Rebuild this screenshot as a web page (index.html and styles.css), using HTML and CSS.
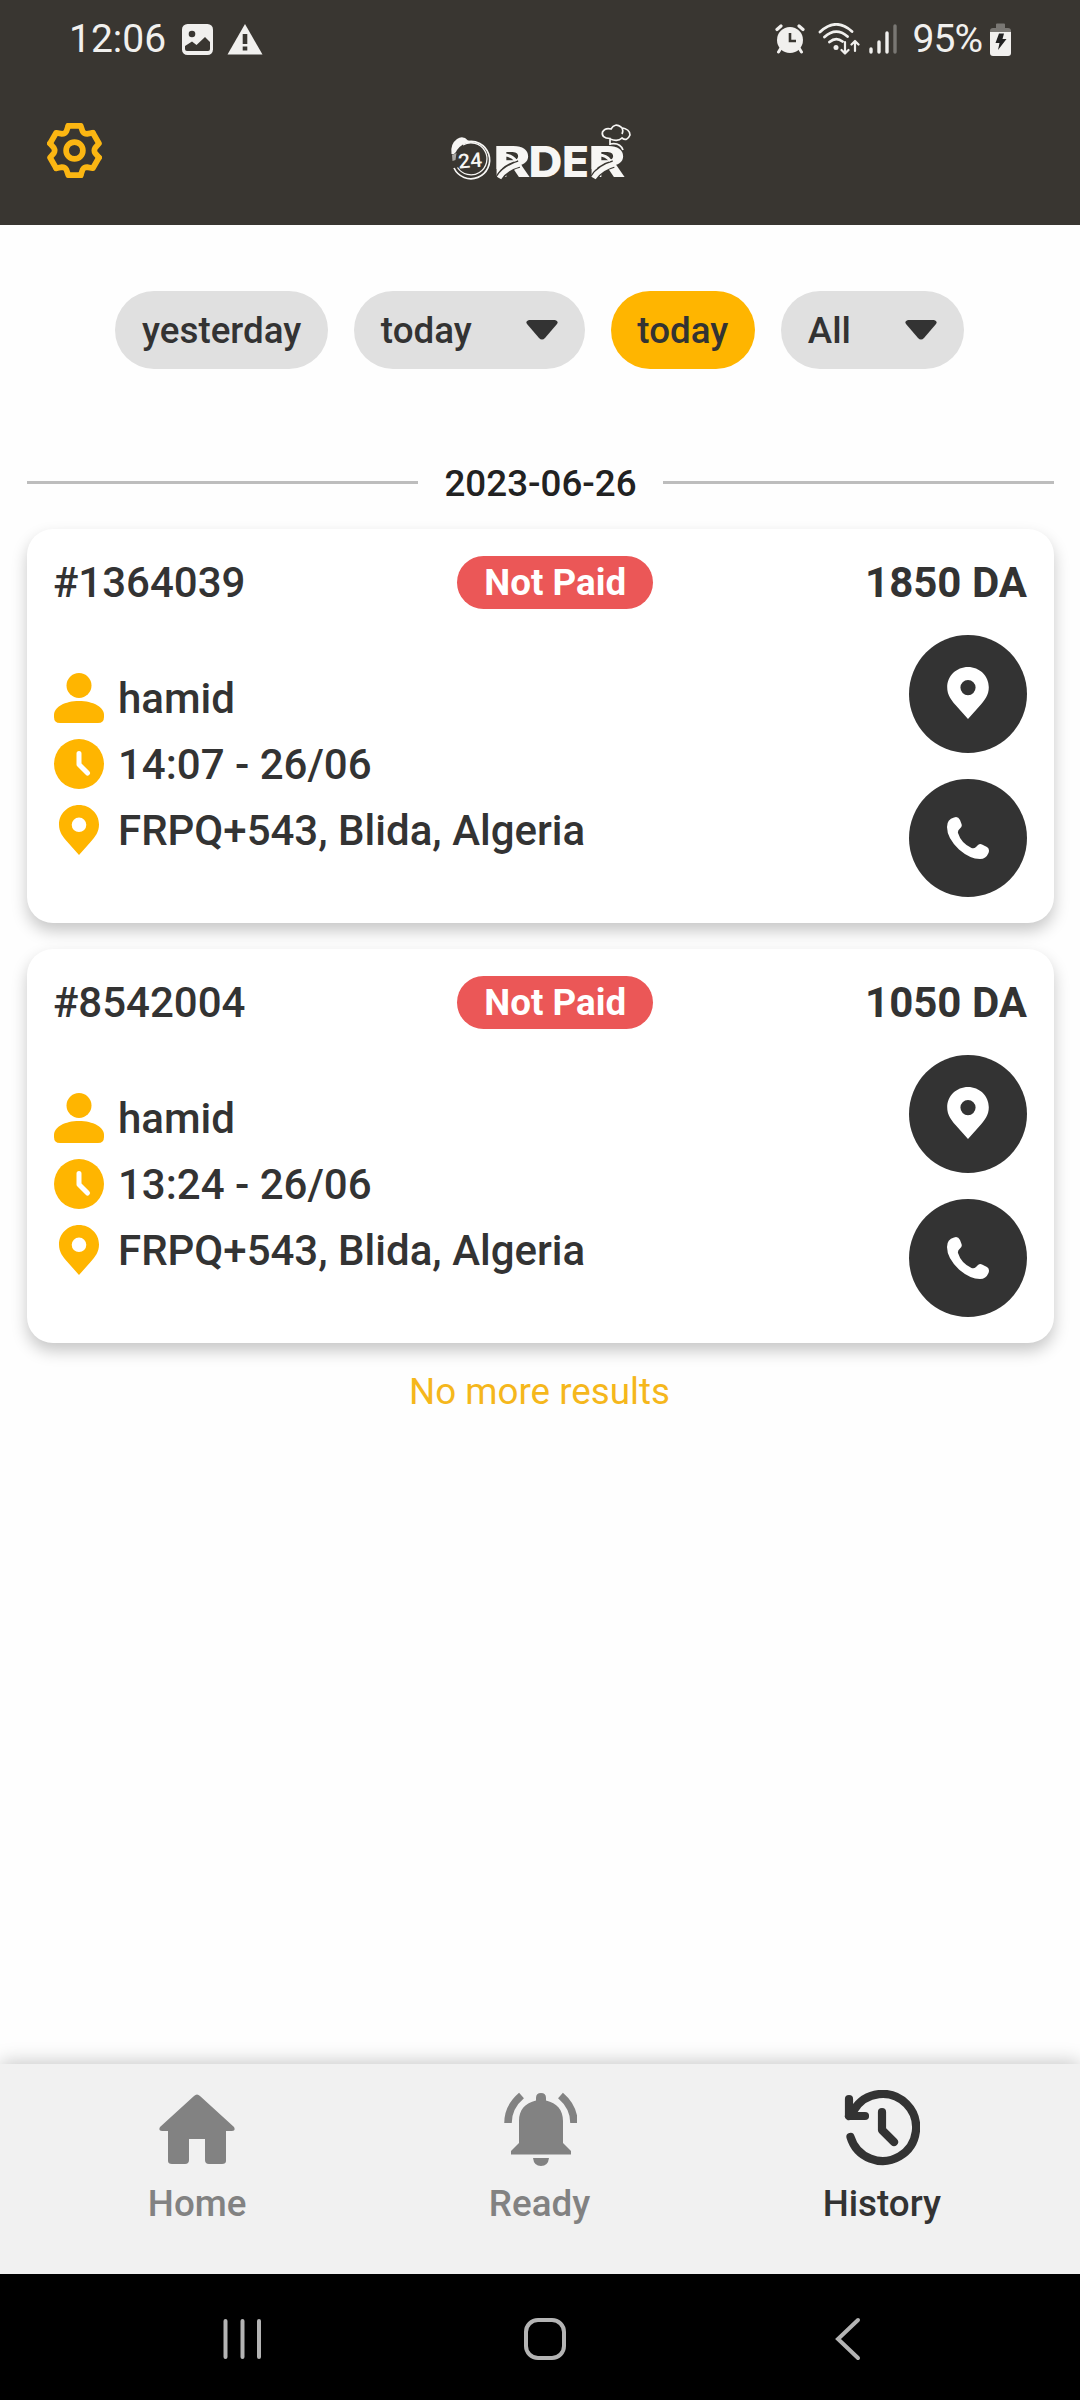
FILE: index.html
```html
<!DOCTYPE html>
<html lang="en">
<head>
	<meta charset="utf-8">
	<title>24 Order - History</title>
	<link rel="stylesheet" href="styles.css">
</head>
<body>
	<!-- shared icons -->
	<svg class="sprite">
		<symbol id="user" viewBox="0 0 50 50">
			<ellipse cx="25" cy="12.5" rx="12.5" ry="12.5"/>
			<path d="M25 28C39 28 50 34 50 42V44Q50 50 44 50H6Q0 50 0 44V42C0 34 11 28 25 28Z"/>
		</symbol>
		<symbol id="clock" viewBox="0 0 50 50">
			<circle cx="25" cy="25" r="25"/>
			<path d="M25 14.500V25.500L33.500 34" fill="none" stroke="#fff" stroke-width="5" stroke-linecap="round" stroke-linejoin="round"/>
		</symbol>
		<symbol id="pin" viewBox="0 0 40 50">
			<path fill-rule="evenodd" d="M20 0C31 0 40 8.500 40 19.500C40 27 36 32 32 36.500L20 50L8 36.500C4 32 0 27 0 19.500C0 8.500 9 0 20 0ZM20 12.500A7.300 7.300 0 1 0 20 27.100A7.300 7.300 0 1 0 20 12.500Z"/>
		</symbol>
		<symbol id="phone" viewBox="0 0 42 42">
			<path d="M0 10Q0 2 7 .5Q11 -1 13 3L14.500 7Q15.500 9.500 13 11.500Q10.500 13.500 11 16Q14 26 24.500 31Q27 32 29 30L31 28Q33 26.500 35 27.500L40 30Q43 32 41.500 36Q39 42 33 42Q23 42 12 32.500Q0 21 0 10Z"/>
		</symbol>
		<symbol id="caret" viewBox="0 0 32 20">
			<path d="M3 0H29Q33 1 31 4L19 18Q16 21 13 18L1 4Q-1 1 3 0Z"/>
		</symbol>
	</svg>

	<header class="header">
		<div class="status-bar">
			<div class="status-left">
				<span class="time">12:06</span>
				<svg class="status-photo" width="31" height="31" viewBox="0 0 31 31">
					<rect width="31" height="31" rx="5.500" fill="#f1f0ee"/>
					<circle cx="10" cy="10" r="3.300" fill="#393631"/>
					<path d="M3 25V22L10 17.500L14.500 21L23 13L28 18V25Q28 27 26 27H5Q3 27 3 25Z" fill="#393631"/>
				</svg>
				<svg width="36" height="31" viewBox="0 0 36 31">
					<path d="M18 0L35.500 30.500H.5Z" fill="#f1f0ee"/>
					<path d="M15.700 10H20.300V20H15.700ZM15.700 22.500H20.300V26.500H15.700Z" fill="#393631"/>
				</svg>
			</div>
			<div class="status-right">
				<svg width="30" height="30" viewBox="0 0 30 30">
					<g fill="none" stroke="#f1f0ee" stroke-linecap="round">
						<path d="M2 5.500L6 2M28 5.500L24 2" stroke-width="3.200"/>
						<path d="M6 24L3.500 28M24 24L26.500 28" stroke-width="3"/>
					</g>
					<circle cx="15" cy="16" r="13" fill="#f1f0ee"/>
					<path d="M15 9V17H21" fill="none" stroke="#393631" stroke-width="2.600"/>
				</svg>
				<svg class="status-wifi" width="42" height="32" viewBox="0 0 42 32">
					<g fill="none" stroke="#f1f0ee" stroke-width="2.800" stroke-linecap="round" stroke-linejoin="round">
						<path d="M2 9Q18 -6 34 8.500M6.500 14Q18 3.500 29.500 13.500M11.500 19Q18 13.500 24.500 18.500"/>
						<path d="M27 19V30M23.500 27L27 30.500L30.500 27M37 28V18M33.500 21.500L37 18L40.500 21.500" stroke-width="2.200"/>
					</g>
					<circle cx="18" cy="24.500" r="2.500" fill="#f1f0ee"/>
				</svg>
				<svg class="status-signal" width="28" height="30" viewBox="0 0 28 30">
					<path d="M2 25V28M10 18V28M18 9V28" stroke="#f1f0ee" stroke-width="3.400" stroke-linecap="round"/>
					<path d="M26 2V28" stroke="#797773" stroke-width="3.400" stroke-linecap="round"/>
				</svg>
				<span class="battery-text">95%</span>
				<svg width="21" height="33" viewBox="0 0 21 33">
					<path d="M6 5V1.500Q6 .5 7 .5H14Q15 .5 15 1.500V5H18Q21 5 21 8V9H0V8Q0 5 3 5Z" fill="#797773"/>
					<path d="M0 9H21V30Q21 33 18 33H3Q0 33 0 30Z" fill="#f1f0ee"/>
					<path d="M9 10.500H14L12.500 16H16.500L8 27L9.500 20H5.500Z" fill="#222"/>
				</svg>
			</div>
		</div>
		<div class="app-bar">
			<svg class="settings" width="55" height="55" viewBox="-82 -82 164 164">
				<g fill="none" stroke="#fbb612" stroke-width="17" stroke-linecap="round" stroke-linejoin="round">
					<path d="M-18.400 -73.700H18.400L24.200 -57Q28.500 -49.400 37.300 -49.500L54.700 -52.800"/>
					<path transform="rotate(60)" d="M-18.400 -73.700H18.400L24.200 -57Q28.500 -49.400 37.300 -49.500L54.700 -52.800"/>
					<path transform="rotate(120)" d="M-18.400 -73.700H18.400L24.200 -57Q28.500 -49.400 37.300 -49.500L54.700 -52.800"/>
					<path transform="rotate(180)" d="M-18.400 -73.700H18.400L24.200 -57Q28.500 -49.400 37.300 -49.500L54.700 -52.800"/>
					<path transform="rotate(240)" d="M-18.400 -73.700H18.400L24.200 -57Q28.500 -49.400 37.300 -49.500L54.700 -52.800"/>
					<path transform="rotate(300)" d="M-18.400 -73.700H18.400L24.200 -57Q28.500 -49.400 37.300 -49.500L54.700 -52.800"/>
					<circle r="25"/>
				</g>
			</svg>
			<svg class="logo" width="180" height="76" viewBox="0 0 180 76">
				<!-- clock with the 24 -->
				<g fill="none" stroke="#f7f6f4">
					<path d="M16 21A18.700 18.700 0 1 1 4 47" stroke-width="1.700"/>
					<path d="M13 24A16 16 0 1 1 7.500 46.500" stroke-width="1.300"/>
				</g>
				<path d="M1.500 33Q0 23 7 18Q13 14 18 19.500Q22 20 25 22Q13 20 7 29Q5 34 1.500 33Z" fill="#f7f6f4"/>
				<path d="M2 34L6.500 32L5.500 39L2.500 40Z" fill="#aaa8a4"/>
				<text class="logo-number" x="8" y="46.500" textLength="24" lengthAdjust="spacingAndGlyphs" transform="rotate(-5 20 38)">24</text>
				<g class="logo-text">
					<text x="43.500" y="56" textLength="37" lengthAdjust="spacingAndGlyphs">R</text>
					<text x="78.500" y="56" textLength="34" lengthAdjust="spacingAndGlyphs">D</text>
					<text x="112" y="56" textLength="27" lengthAdjust="spacingAndGlyphs">E</text>
					<text x="138.500" y="56" textLength="37" lengthAdjust="spacingAndGlyphs">R</text>
				</g>
				<!-- swoosh through both R -->
				<g fill="none" stroke="#393631" stroke-width="8">
					<path d="M49 58Q54 47 69 43M143.500 58Q148.500 47 163.500 43"/>
				</g>
				<g fill="none" stroke="#f7f6f4" stroke-width="5">
					<path d="M49 57Q55 47 71 42.500M143.500 57Q149.500 47 165.500 42.500"/>
					<path d="M54 34Q62 34 66 40M148.500 34Q156.500 34 160.500 40" stroke-width="3"/>
					<path d="M49 25V48M144 25V48"/>
				</g>
				<!-- chef hat -->
				<path d="M160 24V17.500Q151 17 152.500 11Q155 6.500 161 8Q165 1.500 171 6Q174 9 172 13M171 6.500Q180 8 180 14Q177 21 172 17Q168 21 160 18M160 23Q170 21 173 29" fill="none" stroke="#f7f6f4" stroke-width="1.700"/>
			</svg>
		</div>
	</header>

	<main class="content">
		<div class="filters">
			<button class="chip">yesterday</button>
			<button class="chip">today <svg class="caret"><use href="#caret"/></svg></button>
			<button class="chip active">today</button>
			<button class="chip">All <svg class="caret"><use href="#caret"/></svg></button>
		</div>

		<div class="date-divider">
			<span class="line"></span>
			<span class="date">2023-06-26</span>
			<span class="line"></span>
		</div>

		<section class="order-card">
			<div class="order-top">
				<span class="order-id">#1364039</span>
				<span class="badge">Not Paid</span>
				<span class="price">1850 DA</span>
			</div>
			<div class="order-body">
				<div class="details">
					<div class="detail"><svg><use href="#user"/></svg><span>hamid</span></div>
					<div class="detail"><svg><use href="#clock"/></svg><span>14:07 - 26/06</span></div>
					<div class="detail"><svg><use href="#pin"/></svg><span>FRPQ+543, Blida, Algeria</span></div>
				</div>
				<div class="actions">
					<button class="round-button"><svg class="map-icon"><use href="#pin"/></svg></button>
					<button class="round-button"><svg class="phone-icon"><use href="#phone"/></svg></button>
				</div>
			</div>
		</section>

		<section class="order-card">
			<div class="order-top">
				<span class="order-id">#8542004</span>
				<span class="badge">Not Paid</span>
				<span class="price">1050 DA</span>
			</div>
			<div class="order-body">
				<div class="details">
					<div class="detail"><svg><use href="#user"/></svg><span>hamid</span></div>
					<div class="detail"><svg><use href="#clock"/></svg><span>13:24 - 26/06</span></div>
					<div class="detail"><svg><use href="#pin"/></svg><span>FRPQ+543, Blida, Algeria</span></div>
				</div>
				<div class="actions">
					<button class="round-button"><svg class="map-icon"><use href="#pin"/></svg></button>
					<button class="round-button"><svg class="phone-icon"><use href="#phone"/></svg></button>
				</div>
			</div>
		</section>

		<p class="no-more">No more results</p>
	</main>

	<nav class="tab-bar">
		<a class="tab">
			<svg width="76" height="76" viewBox="0 0 76 76">
				<path d="M35 6Q38 3 41 6L75 37Q77 41 73 41H67V71Q67 74 63 74H50Q46 74 46 70V49H30V70Q30 74 26 74H13Q9 74 9 71V41H3Q-1 41 1 37Z" fill="#828282"/>
			</svg>
			<span>Home</span>
		</a>
		<a class="tab">
			<svg width="76" height="76" viewBox="-2 0 76 76">
				<path d="M33 8Q33 3 38 3Q43 3 43 8V10.500C54 13 60 20 60 31V53L68 61V64.500H8V61L16 53V31C16 20 22 13 33 10.500ZM30 68H46Q45 76 38 76Q31 76 30 68Z" fill="#828282"/>
				<path d="M18.500 5.500Q5 17 5 33M57.500 5.500Q71 17 71 33" fill="none" stroke="#828282" stroke-width="7.500"/>
			</svg>
			<span>Ready</span>
		</a>
		<a class="tab selected">
			<svg width="76" height="76" viewBox="0 0 76 76">
				<g fill="none" stroke="#333" stroke-width="8.200" stroke-linecap="round" stroke-linejoin="round">
					<path d="M6.500 47A33.500 33.500 0 1 0 10 20L5 26M5 9V26H21M38 22V40L50 52"/>
				</g>
			</svg>
			<span>History</span>
		</a>
	</nav>

	<div class="system-nav">
		<svg width="44" height="44" viewBox="0 0 44 44"><path d="M5.500 4V40M22.500 4V40M39 4V40"/></svg>
		<svg width="44" height="44" viewBox="0 0 44 44"><rect x="3" y="3" width="38" height="38" rx="12"/></svg>
		<svg width="44" height="44" viewBox="0 0 44 44"><path d="M32 3L12 22L32 41"/></svg>
	</div>
</body>
</html>
```
FILE: styles.css
```css
* {
	box-sizing: border-box;
}

body {
	font-family: Roboto, sans-serif;
	margin: 0;
	width: 1080px;
	height: 2400px;
	display: flex;
	flex-direction: column;
	background-color: #fefefe;
	color: #333;
	overflow: hidden;
}

svg {
	display: block;
	flex: none;
}

.sprite {
	display: none;
}

/* header */
.header {
	height: 225px;
	background-color: #393631;
}

.status-bar {
	height: 78px;
	padding: 0 69px 0 69px;
	display: flex;
	justify-content: space-between;
	align-items: center;
	font-size: 39px;
	color: #f1f0ee;
}

.status-left, .status-right {
	display: flex;
	align-items: center;
}

.status-photo {
	margin: 0 14px 0 16px;
}

.status-wifi {
	margin-left: 13px;
}

.status-signal {
	margin-left: 9px;
}

.battery-text {
	margin: 0 8px 0 16px;
	letter-spacing: -1px;
}

.app-bar {
	height: 147px;
	padding: 45px 47px 0;
	display: flex;
}

.logo {
	margin-left: 348px;
	margin-top: -2px;
	overflow: visible;
}

.logo-number {
	font-size: 20px;
	font-weight: 500;
	fill: #f7f6f4;
}

.logo-text {
	font-family: Inter, sans-serif;
	font-size: 43px;
	font-weight: 800;
	fill: #f7f6f4;
}

/* filters */
.content {
	flex: 1;
	padding: 66px 26px 0 27px;
}

button {
	font-family: inherit;
	border: none;
	color: #333;
}

.filters {
	display: flex;
	justify-content: center;
	gap: 26px;
	padding-right: 2px;
}

.chip {
	height: 78px;
	padding: 0 26.8px;
	border-radius: 39px;
	background-color: #e0e0e0;
	font-size: 36.75px;
	font-weight: 500;
	display: flex;
	align-items: center;
}

.chip.active {
	background-color: #ffb500;
}

.caret {
	width: 32px;
	height: 20px;
	margin-left: 54px;
	fill: #333;
}

.date-divider {
	margin-top: 92px;
	height: 42px;
	display: flex;
	align-items: center;
	gap: 26px;
	font-size: 36.75px;
	font-weight: 500;
	color: #222;
}

.date {
	padding-top: 3px;
}

.line {
	flex: 1;
	height: 3px;
	background-color: #bdbdbd;
}

/* order cards */
.order-card {
	height: 394px;
	margin-top: 26px;
	padding: 27px 27px 0 26px;
	border-radius: 26px;
	background-color: #fff;
	box-shadow: 0 8px 16px rgba(0, 0, 0, 0.22);
}

.order-top {
	height: 53px;
	display: flex;
	justify-content: space-between;
	align-items: center;
	font-size: 42px;
	font-weight: 500;
}

.badge {
	height: 53px;
	line-height: 54px;
	padding: 0 27px;
	border-radius: 27px;
	background-color: #eb5757;
	color: #fff;
	font-size: 36.75px;
	font-weight: 700;
}

.price {
	font-weight: 700;
}

.order-body {
	margin-top: 26px;
	display: flex;
	justify-content: space-between;
}

.details {
	padding: 30px 0 0 1px;
}

.detail {
	height: 66px;
	display: flex;
	align-items: center;
	gap: 14px;
	font-size: 42px;
	font-weight: 500;
}

.detail svg {
	width: 50px;
	height: 50px;
	fill: #ffb500;
}

.actions {
	display: flex;
	flex-direction: column;
	gap: 26px;
}

.round-button {
	width: 118px;
	height: 118px;
	border-radius: 50%;
	background-color: #333;
	display: flex;
	justify-content: center;
	align-items: center;
	padding: 0;
}

.round-button svg {
	fill: #fff;
}

.map-icon {
	width: 42px;
	height: 52px;
	margin-bottom: 2px;
}

.phone-icon {
	width: 42px;
	height: 42px;
}

.no-more {
	margin: 27px 0 0;
	padding-right: 2px;
	font-size: 36.75px;
	line-height: 43px;
	text-align: center;
	color: #f5b71c;
}

/* bottom tabs */
.tab-bar {
	height: 210px;
	padding: 26px 27px 0 26px;
	display: flex;
	background-color: #f1f1f1;
	box-shadow: 0 -2px 18px rgba(0, 0, 0, 0.22);
}

.tab {
	flex: 1;
	display: flex;
	flex-direction: column;
	align-items: center;
	gap: 16px;
	font-size: 36.75px;
	font-weight: 500;
	color: #828282;
}

.tab.selected {
	color: #333;
}

.system-nav {
	height: 126px;
	padding: 3px 0 0 220px;
	display: flex;
	align-items: center;
	gap: 259px;
	background-color: #000;
}

.system-nav svg {
	fill: none;
	stroke: #b4b4b4;
	stroke-width: 4px;
	stroke-linecap: round;
}
```
